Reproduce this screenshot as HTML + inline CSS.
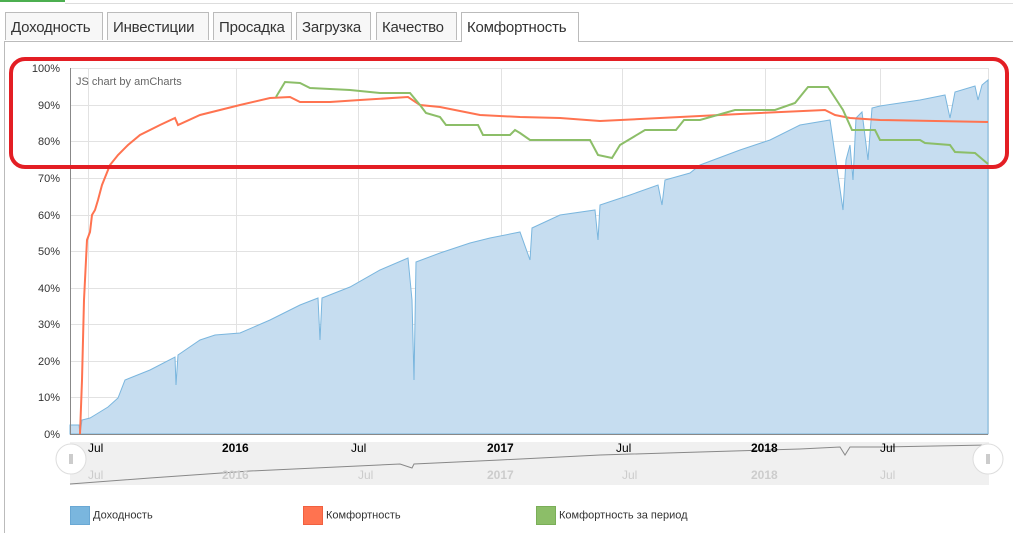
<!DOCTYPE html>
<html><head><meta charset="utf-8"><style>
body{margin:0;width:1013px;height:532px;background:#fff;font-family:"Liberation Sans","DejaVu Sans",sans-serif;overflow:hidden;position:relative}
.tab{position:absolute;top:12px;height:28px;border:1px solid #bbb;border-bottom:none;background:#f7f7f7;font-size:15px;letter-spacing:-0.2px;color:#333;line-height:30px;padding:0 5px;box-sizing:border-box;white-space:nowrap;overflow:hidden}
.ax{font-size:11px;fill:#333}
.lg{position:absolute;top:506px;font-size:11px;color:#333}
.lg i{display:inline-block;width:18px;height:17px;vertical-align:middle;margin-right:3px;border:1px solid}
</style></head><body>
<div style="position:absolute;left:0;top:0;width:65px;height:2px;background:#4caf50"></div>
<div style="position:absolute;left:65px;top:3px;width:948px;height:1px;background:#ddd"></div>
<div style="position:absolute;left:4px;top:41px;width:1009px;height:491px;border-left:1px solid #bbb;border-top:1px solid #bbb"></div>
<div class="tab" style="left:5px;width:98px">Доходность</div>
<div class="tab" style="left:107px;width:102px">Инвестиции</div>
<div class="tab" style="left:213px;width:79px">Просадка</div>
<div class="tab" style="left:296px;width:75px">Загрузка</div>
<div class="tab" style="left:376px;width:81px">Качество</div>
<div class="tab" style="left:461px;width:118px;background:#fff;height:30px">Комфортность</div>
<svg width="1013" height="532" style="position:absolute;left:0;top:0">
<g stroke="#e2e2e2" stroke-width="1">
<line x1="70" x2="988" y1="68.5" y2="68.5"/><line x1="70" x2="988" y1="105.5" y2="105.5"/><line x1="70" x2="988" y1="141.5" y2="141.5"/><line x1="70" x2="988" y1="178.5" y2="178.5"/><line x1="70" x2="988" y1="215.5" y2="215.5"/><line x1="70" x2="988" y1="251.5" y2="251.5"/><line x1="70" x2="988" y1="288.5" y2="288.5"/><line x1="70" x2="988" y1="324.5" y2="324.5"/><line x1="70" x2="988" y1="361.5" y2="361.5"/><line x1="70" x2="988" y1="397.5" y2="397.5"/>
<line x1="88.5" x2="88.5" y1="68" y2="434"/><line x1="236.5" x2="236.5" y1="68" y2="434"/><line x1="358.5" x2="358.5" y1="68" y2="434"/><line x1="501.5" x2="501.5" y1="68" y2="434"/><line x1="622.5" x2="622.5" y1="68" y2="434"/><line x1="765.5" x2="765.5" y1="68" y2="434"/><line x1="880.5" x2="880.5" y1="68" y2="434"/><line x1="988.5" x2="988.5" y1="68" y2="434"/>
</g>
<polygon fill="#c6ddf0" stroke="#7ab6de" stroke-width="1" points="70,425 79,425 80,434 82,420 90,418 95,415 108,407 118,398 125,380 150,370 175,357 176,385 178,355 200,340 215,335 240,333 270,320 300,305 318,298 320,340 322,298 350,287 380,270 408,258 412,300 414,380 416,262 440,253 470,243 490,238 520,232 530,260 532,228 560,215 595,210 598,240 600,205 630,195 658,185 662,205 665,180 690,173 700,165 740,150 770,140 800,125 830,120 838,175 843,210 846,160 850,145 853,180 856,118 862,112 868,160 872,108 880,106 920,100 945,95 950,118 955,92 975,86 978,100 982,85 988,80 988,434 70,434"/>
<polyline fill="none" stroke="#ff7350" stroke-width="2" points="80,434 82,380 84,300 87,240 90,232 92,215 95,210 98,200 102,185 110,165 118,155 128,145 140,135 160,125 175,118 178,125 200,115 240,105 270,98 290,97 300,102 330,102 360,100 408,97 420,105 440,107 480,115 520,117 560,118 600,121 640,119 700,116 760,113 825,110 835,115 850,118 880,120 988,122"/>
<polyline fill="none" stroke="#8cbe68" stroke-width="2" points="276,97 285,82 300,83 310,88 350,90 380,93 410,93 420,105 426,113 440,117 446,125 478,125 483,135 510,135 515,130 520,133 530,140 590,140 598,155 612,158 620,145 645,130 676,130 684,120 700,120 735,110 775,110 795,103 808,87 828,87 843,110 852,130 875,130 880,140 920,140 925,143 950,145 955,152 975,153 988,164"/>
<line x1="70" x2="988" y1="434.5" y2="434.5" stroke="#888"/>
<line x1="70.5" x2="70.5" y1="68" y2="434" stroke="#888"/>
<g class="ax" text-anchor="end">
<text x="60" y="72">100%</text><text x="60" y="109">90%</text><text x="60" y="145">80%</text><text x="60" y="182">70%</text><text x="60" y="219">60%</text><text x="60" y="255">50%</text><text x="60" y="292">40%</text><text x="60" y="328">30%</text><text x="60" y="365">20%</text><text x="60" y="401">10%</text><text x="60" y="438">0%</text>
</g>
<text x="76" y="85" font-size="11" fill="#666">JS chart by amCharts</text>
<rect x="70" y="442" width="919" height="43" fill="#f0f0f0"/>
<polyline fill="none" stroke="#888" stroke-width="1" points="70,484 150,478 250,471 400,464 412,468 414,464 500,460 600,455 700,452 800,449 840,447 845,455 850,447 880,447 988,445"/>
<g font-size="12" fill="#ccc" font-weight="bold"><text x="88" y="479" font-weight="normal">Jul</text><text x="222" y="479">2016</text><text x="358" y="479" font-weight="normal">Jul</text><text x="487" y="479">2017</text><text x="622" y="479" font-weight="normal">Jul</text><text x="751" y="479">2018</text><text x="880" y="479" font-weight="normal">Jul</text></g>
<g font-size="12" fill="#000" font-weight="bold"><text x="88" y="452" font-weight="normal">Jul</text><text x="222" y="452">2016</text><text x="351" y="452" font-weight="normal">Jul</text><text x="487" y="452">2017</text><text x="616" y="452" font-weight="normal">Jul</text><text x="751" y="452">2018</text><text x="880" y="452" font-weight="normal">Jul</text></g>
<circle cx="71" cy="459" r="15" fill="#fff" stroke="#ddd"/><line x1="70" x2="70" y1="454" y2="464" stroke="#999"/><line x1="72" x2="72" y1="454" y2="464" stroke="#999"/>
<circle cx="988" cy="459" r="15" fill="#fff" stroke="#ddd"/><line x1="987" x2="987" y1="454" y2="464" stroke="#999"/><line x1="989" x2="989" y1="454" y2="464" stroke="#999"/>
<rect x="11" y="59" width="996" height="108" rx="14" fill="none" stroke="#e31e24" stroke-width="4"/>
</svg>
<div class="lg" style="left:70px"><i style="background:#7ab6de;border-color:#6aa8d4"></i>Доходность</div>
<div class="lg" style="left:303px"><i style="background:#ff7350;border-color:#f06040"></i>Комфортность</div>
<div class="lg" style="left:536px"><i style="background:#8cbe68;border-color:#7aae58"></i>Комфортность за период</div>
</body></html>
